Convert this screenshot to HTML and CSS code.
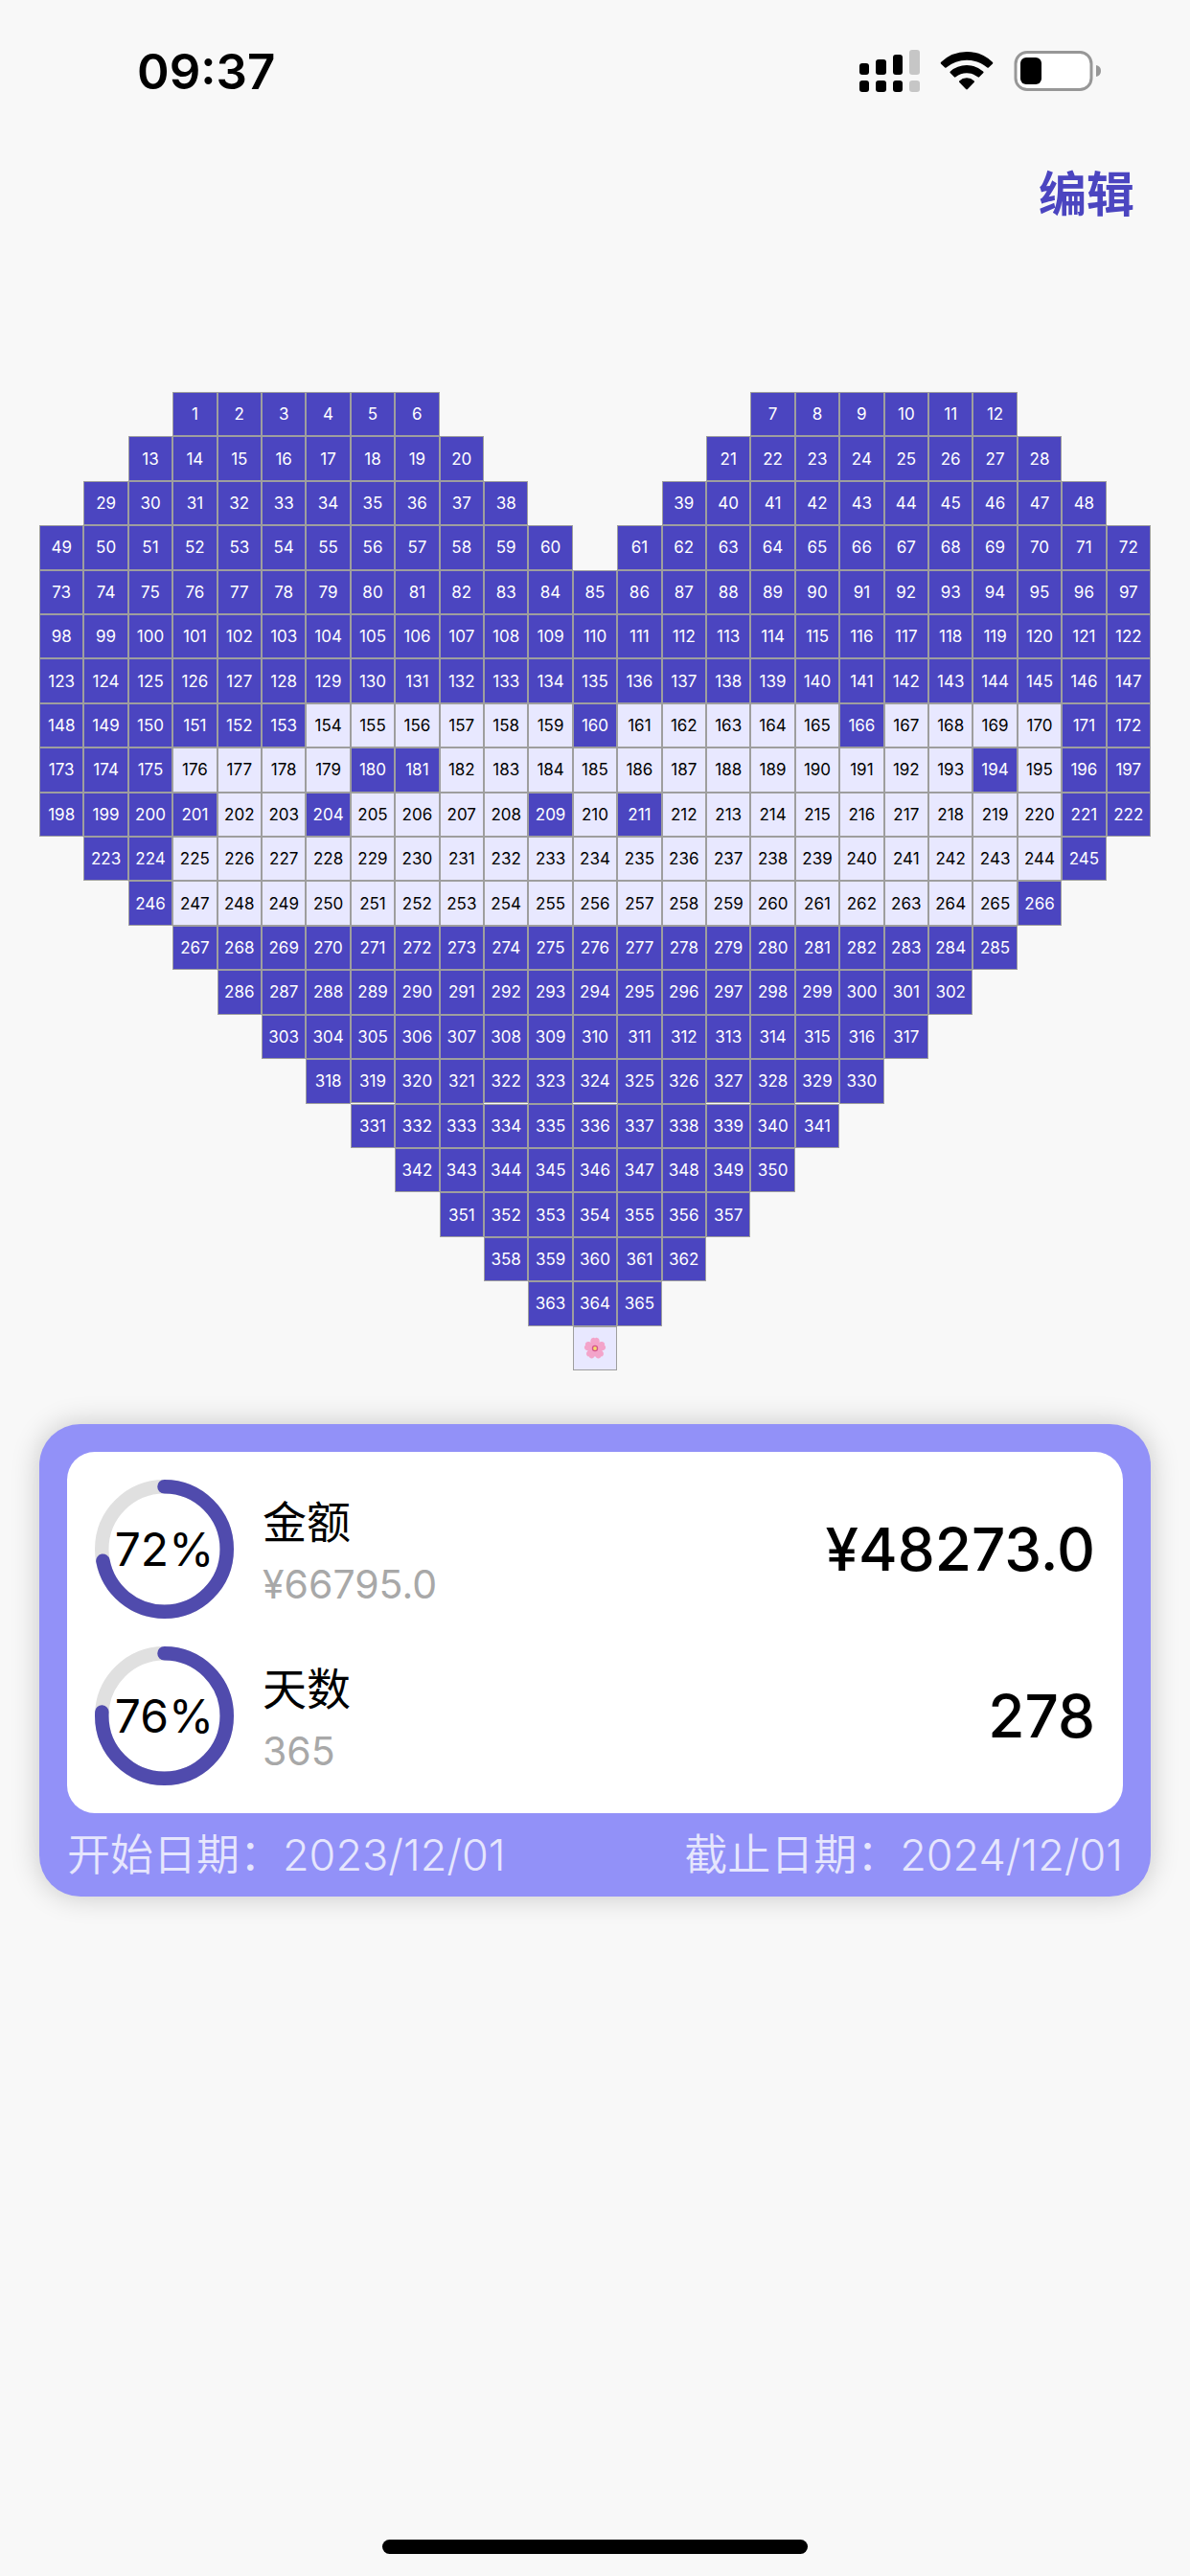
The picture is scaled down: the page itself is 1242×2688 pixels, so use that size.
FILE: index.html
```html
<!DOCTYPE html>
<html lang="zh-CN">

<head>
    <meta charset="UTF-8">
    <meta name="viewport" content="width=device-width, initial-scale=1.0">
    <title>365 存钱</title>
    <link rel="stylesheet" href="styles.css">
</head>

<body>
    <header class="status-bar">
        <span class="time">09:37</span>
        <div class="status-icons">
            <svg class="signal" viewBox="0 0 64 46" width="64" height="46">
                <rect x="1" y="15" width="10" height="12" rx="3" />
                <rect x="18" y="11" width="11" height="16" rx="3" />
                <rect x="36" y="6" width="10" height="21" rx="3" />
                <rect class="dim" x="53" y="1" width="11" height="26" rx="3" />
                <rect x="1" y="33" width="10" height="12" rx="3" />
                <rect x="18" y="33" width="11" height="12" rx="3" />
                <rect x="36" y="33" width="10" height="12" rx="3" />
                <rect class="dim" x="53" y="33" width="11" height="12" rx="3" />
            </svg>
            <svg class="wifi" viewBox="0 0 56 42" width="56" height="42">
                <path d="M1.2 11.8 Q.2 12.8 1.2 13.8 L5.2 17.5 Q5.9 18.1 6.6 17.5 Q16 9.7 28 9.7 Q40 9.7 49.4 17.5 Q50.1 18.1 50.8 17.5 L54.8 13.8 Q55.8 12.8 54.8 11.8 Q43.5 1 28 1 Q12.5 1 1.2 11.8Z" />
                <path d="M10.9 21.5 Q10 22.4 10.9 23.3 L14.9 27.3 Q15.7 28 16.5 27.3 Q21.5 23.3 28 23.3 Q34.5 23.3 39.5 27.3 Q40.3 28 41.1 27.3 L45.1 23.3 Q46 22.4 45.1 21.5 Q38 15 28 15 Q18 15 10.9 21.5Z" />
                <path d="M20.2 31.4 Q19.6 32.3 20.4 33 L27.1 40 Q28 40.8 28.9 40 L35.6 33 Q36.4 32.3 35.8 31.4 Q32.5 28.3 28 28.3 Q23.5 28.3 20.2 31.4Z" />
            </svg>
            <svg class="battery" viewBox="0 0 92 42" width="92" height="42">
                <rect class="shell" x="2" y="1.5" width="79" height="39" rx="12" />
                <rect x="7" y="7" width="22" height="28" rx="6" />
                <path class="cap" d="M86 15 Q91 16 91 21 Q91 26 86 27Z" />
            </svg>
        </div>
    </header>

    <nav class="toolbar">
        <button class="edit-button" type="button">编辑</button>
    </nav>

    <main>
        <div class="heart" id="heart"></div>

        <section class="card">
            <div class="panel">
                <div class="stat">
                    <div class="ring">
                        <svg viewBox="0 0 100 100">
                            <circle class="ring-track" cx="50" cy="50" r="45" />
                            <circle class="ring-value" cx="50" cy="50" r="45" pathLength="100" stroke-dasharray="72 100" />
                        </svg>
                        <span class="percent">72%</span>
                    </div>
                    <div class="stat-text">
                        <h2>金额</h2>
                        <p>¥66795.0</p>
                    </div>
                    <strong class="amount">¥48273.0</strong>
                </div>
                <div class="stat">
                    <div class="ring">
                        <svg viewBox="0 0 100 100">
                            <circle class="ring-track" cx="50" cy="50" r="45" />
                            <circle class="ring-value" cx="50" cy="50" r="45" pathLength="100" stroke-dasharray="76 100" />
                        </svg>
                        <span class="percent">76%</span>
                    </div>
                    <div class="stat-text">
                        <h2>天数</h2>
                        <p>365</p>
                    </div>
                    <strong class="amount">278</strong>
                </div>
            </div>
            <div class="dates">
                <span>开始日期：2023/12/01</span>
                <span>截止日期：2024/12/01</span>
            </div>
        </section>
    </main>

    <div class="home-indicator"></div>

    <template id="flower">
        <svg class="flower" viewBox="0 0 24 24">
            <g id="petals">
                <path id="petal" d="M12 12 C7 9 6 3 9 1.3 Q11 .3 12 1.6 Q13 .3 15 1.3 C18 3 17 9 12 12Z" />
                <use href="#petal" transform="rotate(72 12 12)" />
                <use href="#petal" transform="rotate(144 12 12)" />
                <use href="#petal" transform="rotate(216 12 12)" />
                <use href="#petal" transform="rotate(288 12 12)" />
            </g>
            <circle class="flower-blush" cx="12" cy="12" r="3.2" />
            <circle class="flower-core" cx="12" cy="12" r="1.9" />
        </svg>
    </template>

    <script src="heart.js"></script>
</body>

</html>
```
FILE: styles.css
```css
* {
    box-sizing: border-box;
}

body {
    display: flex;
    flex-direction: column;
    min-height: 100vh;
    margin: 0;
    background: #f8f8f8;
    color: #000;
    font-family: Inter, "Noto Sans CJK SC", sans-serif;
}

/* status bar */
.status-bar {
    display: flex;
    justify-content: space-between;
    align-items: center;
    height: 148px;
    padding: 0 92px 0 143px;
}

.time {
    font-size: 51px;
    font-weight: 600;
}

.status-icons {
    display: flex;
    align-items: center;
    gap: 21px;
}

.signal .dim {
    fill: #c6c6c6;
}

.battery .shell {
    fill: #fff;
    stroke: #979797;
    stroke-width: 3;
}

.battery .cap {
    fill: #979797;
}

/* toolbar */
.toolbar {
    display: flex;
    justify-content: flex-end;
    align-items: center;
    height: 101px;
    padding: 0 58px;
}

.edit-button {
    padding: 0;
    border: 0;
    background: none;
    color: #4b45c0;
    font-family: inherit;
    font-size: 50px;
    font-weight: 700;
    cursor: pointer;
}

main {
    padding: 160px 41px 0;
}

/* heart calendar */
.heart {
    display: grid;
    grid-template-columns: repeat(25, 1fr);
}

.day {
    display: flex;
    justify-content: center;
    align-items: center;
    aspect-ratio: 1;
    min-width: 0;
    border: 1px solid #9e9e9e;
    background: #e8e8ff;
    color: #000;
    font-size: 17px;
}

.day.saved {
    background: #4b45c0;
    color: #fff;
}

.flower {
    width: 24px;
    height: 24px;
    fill: #f3a4ca;
}

.flower-blush {
    fill: #d3558d;
}

.flower-core {
    fill: #f5dc6a;
}

/* summary card */
.card {
    margin-top: 56px;
    padding: 29px 29px 0;
    border-radius: 43px;
    background: #9291f8;
    box-shadow: 0 0 30px rgba(0, 0, 0, 0.2);
}

.panel {
    display: flex;
    flex-direction: column;
    gap: 29px;
    padding: 29px;
    border-radius: 29px;
    background: #fff;
}

.stat {
    display: flex;
    align-items: center;
    gap: 30px;
}

.ring {
    display: grid;
    place-items: center;
    width: 145px;
    height: 145px;
}

.ring svg,
.percent {
    grid-area: 1 / 1;
}

.ring circle {
    fill: none;
    stroke-width: 10;
}

.ring .ring-track {
    stroke: #e0e0e0;
}

.ring .ring-value {
    stroke: #504bad;
    stroke-linecap: round;
    transform: rotate(-90deg);
    transform-origin: center;
}

.percent {
    font-size: 48px;
}

.stat-text {
    flex: 1;
    padding-top: 9px;
}

.stat-text h2,
.stat-text p {
    margin: 0;
    line-height: 65px;
}

.stat-text h2 {
    font-size: 46px;
    font-weight: 400;
}

.stat-text p {
    color: #a8a8a8;
    font-size: 41px;
}

.amount {
    font-size: 62px;
    font-weight: 500;
}

.dates {
    display: flex;
    justify-content: space-between;
    color: #e6e6fd;
    font-size: 45px;
    font-weight: 350;
    line-height: 87px;
}

.home-indicator {
    width: 444px;
    height: 15px;
    margin: auto auto 23px;
    border-radius: 8px;
    background: #000;
}
```
FILE: heart.js
```js
const COLUMNS = 25;

// number of days in each row, a pair means two lobes
const rows = [
    [6, 6], [8, 8], [10, 10], [12, 12],
    [25], [25], [25], [25], [25], [25],
    [23], [21], [19], [17], [15], [13], [11], [9], [7], [5], [3]
];

// first column of each lobe for the rows that are split
const lobeStarts = [[4, 17], [3, 16], [2, 15], [1, 14]];

// days that are not saved yet, [from, to]
const open = [
    [154, 159], [161, 165], [167, 170],
    [176, 179], [182, 193], [195, 195],
    [202, 203], [205, 208], [210, 210], [212, 220],
    [225, 244], [247, 265]
];

const heart = document.getElementById('heart');

function addCell(row, column) {
    const cell = document.createElement('div');
    cell.className = 'day';
    cell.style.gridArea = row + ' / ' + column;
    heart.appendChild(cell);
    return cell;
}

let day = 1;
rows.forEach((parts, r) => {
    parts.forEach((count, p) => {
        const start = parts.length === 2 ? lobeStarts[r][p] : (COLUMNS - count) / 2 + 1;
        for (let i = 0; i < count; i++) {
            const cell = addCell(r + 1, start + i);
            const current = day;
            cell.textContent = current;
            if (!open.some(range => current >= range[0] && current <= range[1])) {
                cell.classList.add('saved');
            }
            day++;
        }
    });
});

const tip = addCell(rows.length + 1, (COLUMNS + 1) / 2);
tip.appendChild(document.getElementById('flower').content.cloneNode(true));
```
